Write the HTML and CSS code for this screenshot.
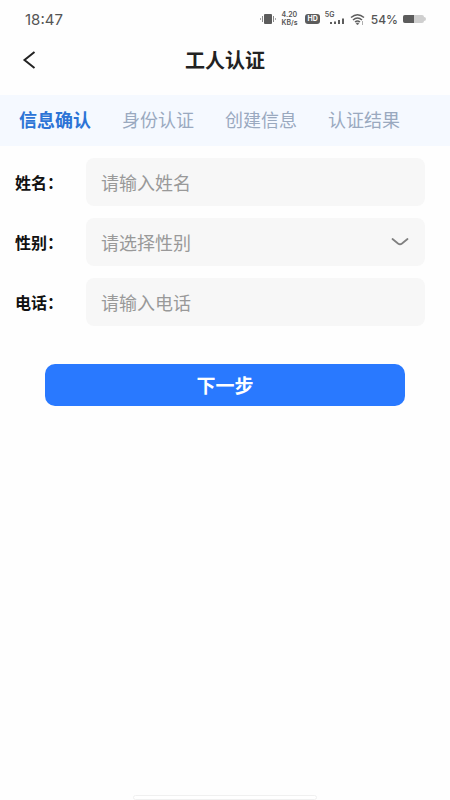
FILE: index.html
```html
<!DOCTYPE html>
<html lang="zh-CN">
<head>
<meta charset="utf-8">
<meta name="viewport" content="width=device-width, initial-scale=1">
<title>工人认证</title>
<link rel="stylesheet" href="styles.css">
</head>
<body>
<div class="status">
  <span class="time">18:47</span>
  <div class="indicators">
    <svg width="16" height="12" viewBox="0 0 16 12" aria-hidden="true">
      <rect x="4" y="1" width="8" height="10" rx="1" fill="#5c5c5c"/>
      <path d="M2.500 3v6M13.500 3v6" stroke="#888" fill="none"/>
      <path d="M.5 5v2M15.500 5v2" stroke="#aaa" fill="none"/>
    </svg>
    <span class="speed"><span>4.20</span><span>KB/s</span></span>
    <span class="hd">HD</span>
    <span class="cell">
      <span class="network">5G</span>
      <svg width="20" height="12" viewBox="0 0 20 12" aria-hidden="true">
        <path d="M5 9h2v2H5zM9 8.500h2v2.500H9zM13 7h2v4h-2zM17 5.500h2v5.500h-2z" fill="#5c5c5c"/>
      </svg>
    </span>
    <svg width="16" height="12" viewBox="0 0 16 12" aria-hidden="true">
      <g fill="none" stroke="#5c5c5c" stroke-width="1.500">
        <path d="M1 4.500Q7.500-1 14 4.500M3 7Q7.500 3 12 7M5 9Q7.500 7 10 9"/>
      </g>
      <path d="M6 10h3l-1.500 2zM12.500 8v4" fill="#5c5c5c" stroke="#777" stroke-width=".6"/>
    </svg>
    <span class="percent">54%</span>
    <svg width="23" height="10" viewBox="0 0 23 10" aria-hidden="true">
      <rect x="0" y="1" width="21" height="8" rx="2" fill="#cfcfcf"/>
      <path d="M2 1h9v8H2Q0 9 0 7V3Q0 1 2 1z" fill="#5c5c5c"/>
      <path d="M21 3q2 0 2 2t-2 2z" fill="#cfcfcf"/>
    </svg>
  </div>
</div>
<header class="header">
  <button class="back" type="button" aria-label="返回">
    <svg width="14" height="20" viewBox="0 0 14 20" aria-hidden="true">
      <path d="M12.500 2L2.500 10l10 8" fill="none" stroke="#222" stroke-width="2"/>
    </svg>
  </button>
  <h1 class="title">工人认证</h1>
</header>
<nav class="tabs">
  <a class="tab active" href="#confirm" aria-current="step">信息确认</a>
  <a class="tab" href="#identity">身份认证</a>
  <a class="tab" href="#create">创建信息</a>
  <a class="tab" href="#result">认证结果</a>
</nav>
<form class="form">
  <div class="row">
    <label class="label" for="name">姓名：</label>
    <input class="field" id="name" type="text" placeholder="请输入姓名">
  </div>
  <div class="row">
    <label class="label" for="gender">性别：</label>
    <div class="picker">
      <select class="field" id="gender">
        <option value="">请选择性别</option>
        <option>男</option>
        <option>女</option>
      </select>
      <svg class="chevron" width="18" height="10" viewBox="0 0 18 10" aria-hidden="true">
        <path d="M1.500 2L7 6.500Q9 8 11 6.500L16.500 2" fill="none" stroke="#808080" stroke-width="1.800" stroke-linecap="round"/>
      </svg>
    </div>
  </div>
  <div class="row">
    <label class="label" for="phone">电话：</label>
    <input class="field" id="phone" type="tel" placeholder="请输入电话">
  </div>
  <button class="submit" type="button">下一步</button>
</form>
<div class="home"></div>
</body>
</html>
```

FILE: styles.css
```css
* {
  box-sizing: border-box;
}

body {
  margin: 0;
  min-height: 100vh;
  display: flex;
  flex-direction: column;
  background: #fefefe;
  font-family: "Noto Sans CJK SC", sans-serif;
}

.status {
  height: 38px;
  padding: 0 24px 0 25px;
  display: flex;
  align-items: center;
  justify-content: space-between;
  color: #555;
  font-family: Inter, sans-serif;
}

.time {
  font-size: 15px;
}

.indicators {
  display: flex;
  align-items: center;
  gap: 5px;
}

.speed {
  width: 19px;
  display: flex;
  flex-direction: column;
  font-size: 7px;
  font-weight: 600;
  line-height: 8px;
}

.hd {
  padding: 0 2px;
  border-radius: 3px;
  background: #5c5c5c;
  color: #fff;
  font-size: 7px;
  font-weight: 700;
  line-height: 10px;
}

.cell {
  position: relative;
  display: flex;
}

.network {
  position: absolute;
  top: -2px;
  left: 0;
  font-size: 7px;
  font-weight: 600;
  line-height: 8px;
}

.percent {
  font-size: 12px;
  font-weight: 500;
}

.header {
  position: relative;
  height: 44px;
  display: flex;
  align-items: center;
  justify-content: center;
}

.back {
  position: absolute;
  left: 12px;
  top: 6px;
  padding: 6px 10px;
  border: 0;
  background: none;
  line-height: 0;
}

.title {
  margin: 0;
  font-size: 20px;
  font-weight: 700;
  line-height: 30px;
  color: #222;
}

.tabs {
  margin-top: 13px;
  height: 51px;
  padding: 0 19px 4px;
  display: flex;
  align-items: center;
  gap: 31px;
  background: #f5f9ff;
}

.tab {
  color: #9aa9bf;
  font-size: 18px;
  line-height: 26px;
  white-space: nowrap;
  text-decoration: none;
}

.active {
  color: #2c74d6;
  font-weight: 700;
}

.form {
  padding: 12px 25px 0 15px;
  display: flex;
  flex-direction: column;
  gap: 12px;
}

.row {
  display: flex;
  align-items: center;
}

.label {
  flex: 0 0 71px;
  font-size: 16px;
  font-weight: 700;
  color: #111;
}

.field {
  flex: 1;
  min-width: 0;
  width: 100%;
  height: 48px;
  padding: 0 15px;
  border: 0;
  border-radius: 8px;
  background: #f7f7f7;
  color: #999;
  font-family: inherit;
  font-size: 18px;
  appearance: none;
}

.field::placeholder {
  color: #999;
}

.picker {
  position: relative;
  flex: 1;
  display: flex;
}

.chevron {
  position: absolute;
  right: 16px;
  top: 19px;
  pointer-events: none;
}

.submit {
  margin: 26px 20px 0 30px;
  height: 42px;
  padding: 0 0 2px;
  border: 0;
  border-radius: 10px;
  background: #2979ff;
  color: #fff;
  font-family: inherit;
  font-size: 19px;
  font-weight: 700;
}

.home {
  width: 184px;
  height: 5px;
  margin: auto auto 0;
  border: 1px solid #f0f0f0;
  border-radius: 3px;
  background: #fff;
}
```
